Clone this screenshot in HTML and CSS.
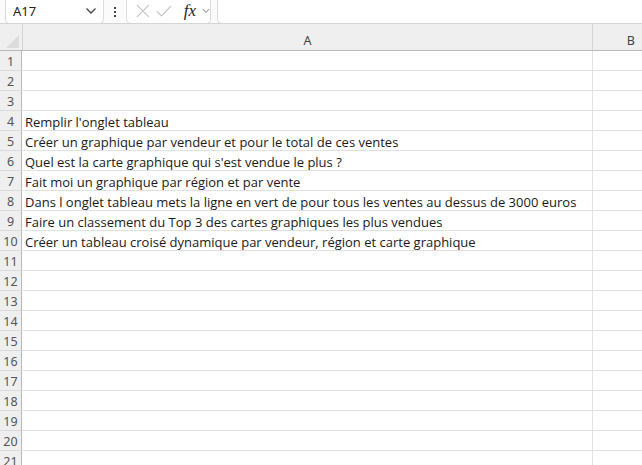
FILE: index.html
```html
<!DOCTYPE html>
<html>
<head>
<meta charset="utf-8">
<link rel="stylesheet" href="styles.css">
</head>
<body>
<div class="toolbar">
  <div class="namebox"><span>A17</span>
    <svg class="chev" width="12" height="8" viewBox="0 0 12 8"><path d="M1.5 1.5 L6 6 L10.5 1.5" fill="none" stroke="#444" stroke-width="1.3"/></svg>
  </div>
  <div class="dots"><i></i><i></i><i></i></div>
  <div class="fbtns">
    <svg width="14" height="14" viewBox="0 0 14 14"><path d="M1 1 L13 13 M13 1 L1 13" stroke="#c4c4c4" stroke-width="1.2"/></svg>
    <svg width="16" height="14" viewBox="0 0 16 14"><path d="M1 7.5 L5.5 12 L15 2" fill="none" stroke="#c4c4c4" stroke-width="1.2"/></svg>
    <span class="fx">fx</span>
    <svg width="8" height="6" viewBox="0 0 8 6"><path d="M0.8 1 L4 4.5 L7.2 1" fill="none" stroke="#888" stroke-width="1"/></svg>
  </div>
  <div class="fbar"></div>
</div>
<div class="sheet">
  <div class="hdr">
    <div class="corner"><svg width="14" height="13" viewBox="0 0 14 13"><path d="M13 0 L13 13 L0 13 Z" fill="#dcdcdc"/></svg></div>
    <div class="colA">A</div>
    <div class="colB">B</div>
  </div>
  <div class="row"><div class="rn">1</div><div class="ca"></div><div class="cb"></div></div>
  <div class="row"><div class="rn">2</div><div class="ca"></div><div class="cb"></div></div>
  <div class="row"><div class="rn">3</div><div class="ca"></div><div class="cb"></div></div>
  <div class="row"><div class="rn">4</div><div class="ca">Remplir l'onglet tableau</div><div class="cb"></div></div>
  <div class="row"><div class="rn">5</div><div class="ca">Créer un graphique par vendeur et pour le total de ces ventes</div><div class="cb"></div></div>
  <div class="row"><div class="rn">6</div><div class="ca">Quel est la carte graphique qui s'est vendue le plus ?</div><div class="cb"></div></div>
  <div class="row"><div class="rn">7</div><div class="ca">Fait moi un graphique par région et par vente</div><div class="cb"></div></div>
  <div class="row"><div class="rn">8</div><div class="ca">Dans l onglet tableau mets la ligne en vert de pour tous les ventes au dessus de 3000 euros</div><div class="cb"></div></div>
  <div class="row"><div class="rn">9</div><div class="ca">Faire un classement du Top 3 des cartes graphiques les plus vendues</div><div class="cb"></div></div>
  <div class="row"><div class="rn">10</div><div class="ca">Créer un tableau croisé dynamique par vendeur, région et carte graphique</div><div class="cb"></div></div>
  <div class="row"><div class="rn">11</div><div class="ca"></div><div class="cb"></div></div>
  <div class="row"><div class="rn">12</div><div class="ca"></div><div class="cb"></div></div>
  <div class="row"><div class="rn">13</div><div class="ca"></div><div class="cb"></div></div>
  <div class="row"><div class="rn">14</div><div class="ca"></div><div class="cb"></div></div>
  <div class="row"><div class="rn">15</div><div class="ca"></div><div class="cb"></div></div>
  <div class="row"><div class="rn">16</div><div class="ca"></div><div class="cb"></div></div>
  <div class="row"><div class="rn">17</div><div class="ca"></div><div class="cb"></div></div>
  <div class="row"><div class="rn">18</div><div class="ca"></div><div class="cb"></div></div>
  <div class="row"><div class="rn">19</div><div class="ca"></div><div class="cb"></div></div>
  <div class="row"><div class="rn">20</div><div class="ca"></div><div class="cb"></div></div>
  <div class="row"><div class="rn">21</div><div class="ca"></div><div class="cb"></div></div>
</div>
</body>
</html>
```
FILE: styles.css
```css
html, body { margin: 0; padding: 0; background: #fff; overflow: hidden; }
body { width: 642px; height: 465px; font-family: "Open Sans", sans-serif; }
.toolbar { height: 23px; display: flex; align-items: flex-end; background: #fbfbfb; }
.namebox { margin-left: 5px; width: 99px; height: 25px; box-sizing: border-box; border: 1px solid #dcdcdc; border-top: none; border-radius: 0 0 5px 5px; background: #fff; display: flex; align-items: center; justify-content: space-between; padding: 0 6px 0 7px; margin-bottom: -1px; }
.namebox span { font-family: "Noto Sans", sans-serif; font-size: 13px; color: #222; }
.dots { width: 22px; display: flex; flex-direction: column; align-items: center; gap: 2px; padding-bottom: 6px; }
.dots i { width: 2px; height: 2px; background: #444; display: block; }
.fbtns { width: 85px; height: 25px; box-sizing: border-box; border: 1px solid #dcdcdc; border-top: none; border-radius: 0 0 5px 5px; background: #fff; display: flex; align-items: center; padding-left: 9px; gap: 6px; margin-bottom: -1px; }
.fx { font-family: "Liberation Serif", serif; font-style: italic; font-size: 17px; color: #222; margin-left: 6px; }
.fbar { margin-left: 6px; flex: 1; height: 25px; box-sizing: border-box; border: 1px solid #dcdcdc; border-top: none; border-right: none; border-radius: 0 0 0 5px; background: #fff; margin-bottom: -1px; }
.sheet { display: flex; flex-direction: column; }
.hdr { height: 28px; display: flex; background: #efefef; border-top: 1px solid #d4d4d4; border-bottom: 1px solid #b8b8b8; box-sizing: border-box; font-family: "Noto Sans", sans-serif; font-size: 12.5px; color: #444; }
.corner { width: 22px; display: flex; align-items: flex-end; justify-content: flex-end; padding: 0 2px 2px 0; box-sizing: border-box; }
.colA { width: 571px; display: flex; align-items: center; justify-content: center; padding-top: 7px; box-sizing: border-box; border-right: 1px solid #d4d4d4; border-left: 1px solid #d4d4d4; }
.colB { flex: 1; display: flex; align-items: center; justify-content: flex-end; padding: 7px 7px 0 0; }
.row { height: 20px; display: flex; box-sizing: border-box; }
.rn { width: 22px; background: #efefef; border-right: 1px solid #b8b8b8; border-bottom: 1px solid #dadada; box-sizing: border-box; font-family: "Noto Sans", sans-serif; font-size: 12.5px; color: #555; display: flex; align-items: center; justify-content: center; padding-top: 1px; }
.ca { width: 571px; border-bottom: 1px solid #e1e1e1; border-right: 1px solid #e1e1e1; box-sizing: border-box; font-family: "Open Sans", sans-serif; font-size: 13px; color: #1a1a1a; white-space: nowrap; padding-left: 3px; display: flex; align-items: center; padding-top: 2px; }
.cb { flex: 1; border-bottom: 1px solid #e1e1e1; box-sizing: border-box; }
```
